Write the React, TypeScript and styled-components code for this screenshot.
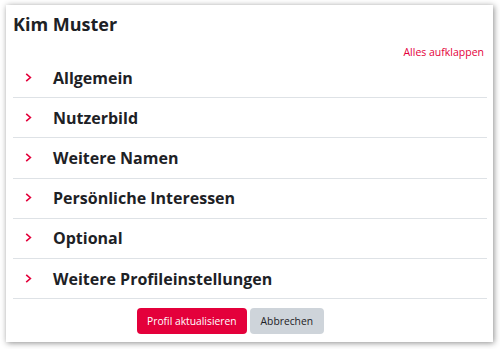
import React from 'react';
import styled, { createGlobalStyle } from 'styled-components';

const GlobalStyle = createGlobalStyle`
  html, body {
    margin: 0;
    padding: 0;
    background: #ffffff;
  }
  body {
    font-family: 'Open Sans', 'Noto Sans', sans-serif;
    color: #1d2125;
  }
`;

const Page = styled.div`
  box-sizing: border-box;
  width: 500px;
  height: 349px;
  padding: 5px 7px 7px 6px;
`;

const Card = styled.div`
  box-sizing: border-box;
  width: 487px;
  height: 337px;
  background: #ffffff;
  box-shadow: 1px 1px 6px rgba(0, 0, 0, 0.45);
  padding: 7px 6px 0 7px;
  display: flex;
  flex-direction: column;
`;

const Title = styled.h2`
  margin: 0;
  font-size: 18px;
  line-height: 24px;
  font-weight: 700;
  color: #1d2125;
`;

const ExpandLink = styled.a`
  align-self: flex-end;
  margin: 10px 3px 0 0;
  font-size: 10.5px;
  line-height: 12px;
  color: #e4003b;
  text-decoration: none;
  cursor: pointer;
`;

const SectionList = styled.div`
  display: flex;
  flex-direction: column;
`;

const SectionRow = styled.div`
  box-sizing: border-box;
  height: 40.2px;
  display: flex;
  align-items: center;
  border-bottom: 1px solid #dee2e6;
  padding-left: 12px;
`;

const Chevron = styled.svg`
  width: 7px;
  height: 9px;
  flex: none;
  margin-right: 21px;
  margin-top: -1px;
`;

const SectionLabel = styled.span`
  font-size: 16px;
  font-weight: 700;
  line-height: 20px;
  color: #1d2125;
`;

const ButtonRow = styled.div`
  display: flex;
  gap: 3px;
  padding: 9px 0 0 124px;
`;

const Button = styled.button<{ $variant: 'primary' | 'secondary' }>`
  box-sizing: border-box;
  height: 26px;
  padding: 0 ${({ $variant }) => ($variant === 'primary' ? '10px' : '11px')};
  border: none;
  border-radius: 4px;
  font-family: 'Open Sans', 'Noto Sans', sans-serif;
  font-size: 10.3px;
  background: ${({ $variant }) => ($variant === 'primary' ? '#e4003b' : '#ced4da')};
  color: ${({ $variant }) => ($variant === 'primary' ? '#ffffff' : '#1d2125')};
  cursor: pointer;
`;

const sections = [
  'Allgemein',
  'Nutzerbild',
  'Weitere Namen',
  'Persönliche Interessen',
  'Optional',
  'Weitere Profileinstellungen',
];

const App = () => (
  <>
    <GlobalStyle />
    <Page>
      <Card>
        <Title>Kim Muster</Title>
        <ExpandLink>Alles aufklappen</ExpandLink>
        <SectionList>
          {sections.map((name) => (
            <SectionRow key={name}>
              <Chevron viewBox="0 0 7 9">
                <polyline
                  points="1.2,0.8 5.4,4.5 1.2,8.2"
                  fill="none"
                  stroke="#e4003b"
                  strokeWidth="1.6"
                />
              </Chevron>
              <SectionLabel>{name}</SectionLabel>
            </SectionRow>
          ))}
        </SectionList>
        <ButtonRow>
          <Button $variant="primary">Profil aktualisieren</Button>
          <Button $variant="secondary">Abbrechen</Button>
        </ButtonRow>
      </Card>
    </Page>
  </>
);

export default App;
